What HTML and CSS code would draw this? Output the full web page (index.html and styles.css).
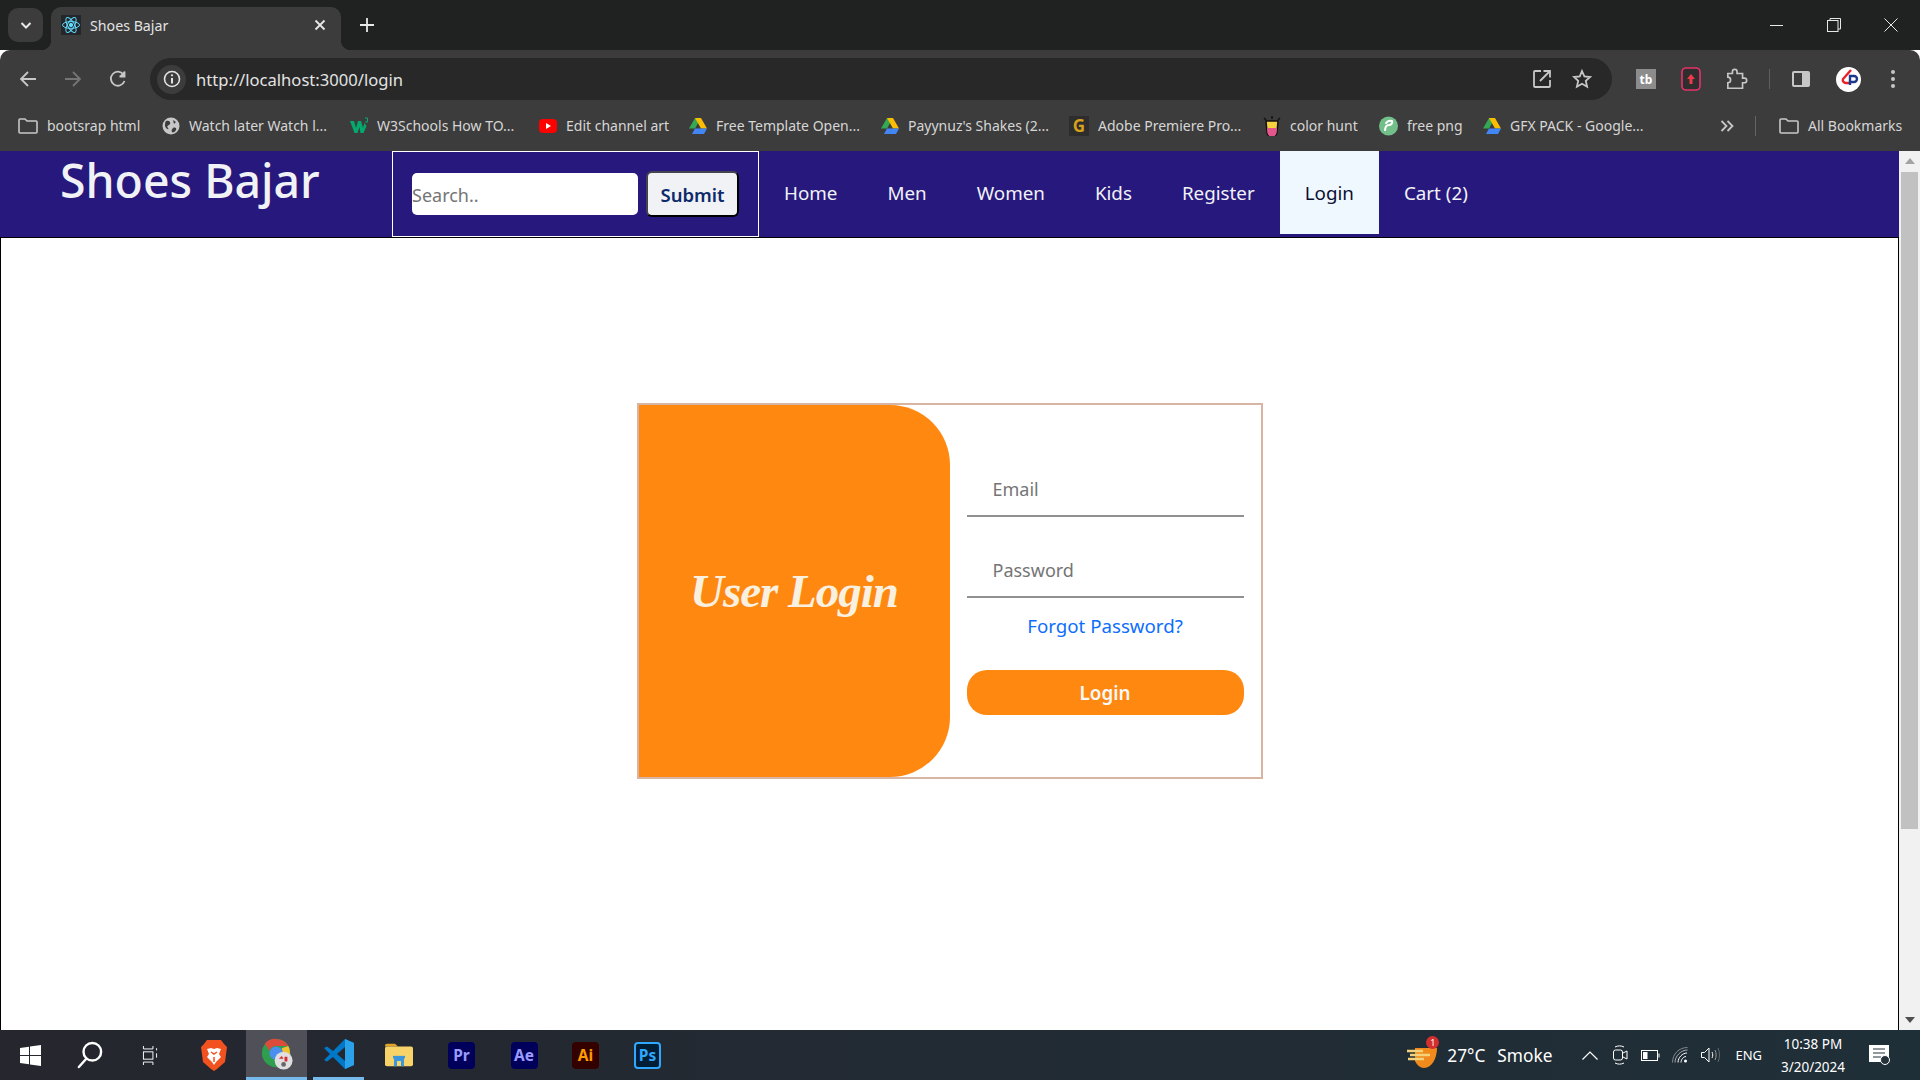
FILE: index.html
```html
<!DOCTYPE html>
<html lang="en">

<head>
    <meta charset="UTF-8">
    <meta name="viewport" content="width=device-width, initial-scale=1.0">
    <title>Shoes Bajar</title>
    <link rel="stylesheet" href="styles.css">
</head>

<body>
    <div class="screen">
        <!-- tab strip -->
        <div class="tabstrip">
            <div class="tab-search">
                <svg width="14" height="14" viewBox="0 0 14 14"><path d="M2.5 5l4.5 4.5L11.500 5" fill="none" stroke="#e8e8e8" stroke-width="2"/></svg>
            </div>
            <div class="tab">
                <div class="favicon">
                    <svg width="20" height="20" viewBox="0 0 20 20" fill="none" stroke="#61dafb" stroke-width="1">
                        <ellipse cx="10" cy="10" rx="8.500" ry="3.400"/>
                        <ellipse cx="10" cy="10" rx="8.500" ry="3.400" transform="rotate(60 10 10)"/>
                        <ellipse cx="10" cy="10" rx="8.500" ry="3.400" transform="rotate(120 10 10)"/>
                        <circle cx="10" cy="10" r="1.700" fill="#61dafb"/>
                    </svg>
                </div>
                <span class="tab-title">Shoes Bajar</span>
                <svg class="tab-close" width="12" height="12" viewBox="0 0 12 12"><path d="M1.500 1.500l9 9M10.500 1.500l-9 9" stroke="#e8e8e8" stroke-width="1.800"/></svg>
            </div>
            <svg class="new-tab" width="14" height="14" viewBox="0 0 14 14"><path d="M7 0v14M0 7h14" stroke="#e8e8e8" stroke-width="1.800"/></svg>
            <div class="win-btns">
                <svg width="14" height="14" viewBox="0 0 14 14"><path d="M0 7.500h13" stroke="#e8e8e8"/></svg>
                <svg width="14" height="14" viewBox="0 0 14 14" fill="none" stroke="#e8e8e8"><rect x="0.500" y="2.500" width="10.500" height="11"/><path d="M3 2.500V.5h10.500V11H11"/></svg>
                <svg width="14" height="14" viewBox="0 0 14 14"><path d="M.5.500l13 13M13.500.500l-13 13" stroke="#e8e8e8"/></svg>
            </div>
        </div>

        <!-- toolbar -->
        <div class="toolbar">
            <div class="nav-icons">
                <svg width="18" height="18" viewBox="0 0 18 18" fill="none" stroke="#c7c7c7" stroke-width="1.800"><path d="M17 9H2M9 2L2 9l7 7"/></svg>
                <svg width="18" height="18" viewBox="0 0 18 18" fill="none" stroke="#757575" stroke-width="1.800"><path d="M1 9h15M9 2l7 7-7 7"/></svg>
                <svg width="18" height="18" viewBox="0 0 18 18" fill="none" stroke="#c7c7c7" stroke-width="1.800"><path d="M15.500 11a7 7 0 1 1-1-6.500"/><path d="M15.500 1v5h-5" fill="#c7c7c7" stroke="none"/><path d="M15.500 1.500v5h-5"/></svg>
            </div>
            <div class="omnibox">
                <div class="site-chip">
                    <svg width="18" height="18" viewBox="0 0 18 18" fill="none" stroke="#e3e3e3" stroke-width="1.600"><circle cx="9" cy="9" r="7.500"/><path d="M9 8v5.500" stroke-width="2"/><circle cx="9" cy="5.300" r="1.100" fill="#e3e3e3" stroke="none"/></svg>
                </div>
                <span class="url">http://localhost:3000/login</span>
                <svg class="omni-icon" width="20" height="20" viewBox="0 0 20 20" fill="none" stroke="#c7c7c7" stroke-width="1.800"><path d="M9 2H3a1 1 0 0 0-1 1v14a1 1 0 0 0 1 1h14a1 1 0 0 0 1-1v-6"/><path d="M8 12L18 2M11.500 2H18v6.500"/></svg>
                <svg class="omni-icon" width="20" height="20" viewBox="0 0 20 20" fill="none" stroke="#c7c7c7" stroke-width="1.800"><path d="M10 2l2.400 5.400 5.800.6-4.400 3.900 1.300 5.800-5.100-3-5.100 3 1.300-5.800L2 8l5.800-.6z"/></svg>
            </div>
            <div class="ext-icons">
                <div class="ext-tb"><span>tb</span></div>
                <svg width="20" height="24" viewBox="0 0 20 24"><rect x="1" y="1" width="18" height="22" rx="4" fill="#2e2e2e" stroke="#e8336a" stroke-width="1.600"/><path d="M10 7l4 5h-2.500v5h-3v-5H6z" fill="#f03a4a"/></svg>
                <svg width="22" height="24" viewBox="0 0 22 24" fill="none" stroke="#c7c7c7" stroke-width="1.800"><path d="M2 6h5V4a2.500 2.500 0 0 1 5 0v2h6v5h2a2.500 2.500 0 0 1 0 5h-2v6H2v-6a3 3 0 0 0 0-6z" transform="translate(0 1) scale(.92)"/></svg>
                <div class="tool-sep"></div>
                <svg width="20" height="20" viewBox="0 0 20 20"><rect x="1" y="2" width="18" height="16" rx="2" fill="#c7c7c7"/><rect x="3" y="4" width="8" height="12" fill="#3c3c3c"/></svg>
                <div class="avatar">
                    <svg width="24" height="24" viewBox="0 0 24 24" fill="none" stroke-width="2.400"><path d="M14 3L6 12a3 3 0 0 0 3 4h3" stroke="#e8202a"/><path d="M13 18V9h4a3 3 0 0 1 0 6h-3" stroke="#1c3a8a"/></svg>
                </div>
                <svg class="menu-dots" width="6" height="20" viewBox="0 0 6 20" fill="#c7c7c7"><circle cx="3" cy="3" r="2"/><circle cx="3" cy="10" r="2"/><circle cx="3" cy="17" r="2"/></svg>
            </div>
        </div>

        <!-- bookmarks -->
        <div class="bookmarks">
            <div class="bm">
                <svg width="20" height="18" viewBox="0 0 20 18" fill="none" stroke="#c7c7c7" stroke-width="1.600"><path d="M1 3a1 1 0 0 1 1-1h5l2 2h9a1 1 0 0 1 1 1v10a1 1 0 0 1-1 1H2a1 1 0 0 1-1-1z"/></svg>
                <span>bootsrap html</span>
            </div>
            <div class="bm">
                <svg width="18" height="18" viewBox="0 0 18 18"><circle cx="9" cy="9" r="8.500" fill="#c7c7c7"/><path d="M4 4c3-1 5 1 4 3S4 8 6 11s-3 0-3-2 0-4 1-5zM11 11c2-1 4 0 3 2s-3 3-4 2 0-3 1-4zM11 3l3 2-2 2z" fill="#3c3c3c"/></svg>
                <span>Watch later Watch l...</span>
            </div>
            <div class="bm">
                <svg width="18" height="18" viewBox="0 0 18 18"><path d="M0 4h4l2 7 2-7h3l2 7 1.500-5 2 3-3 7h-3L9.500 10 7.500 16h-3z" fill="#04aa6d"/><path d="M15 1h2.500v4H15" fill="none" stroke="#04aa6d"/></svg>
                <span>W3Schools How TO...</span>
            </div>
            <div class="bm">
                <svg width="18" height="18" viewBox="0 0 18 18"><rect y="2" width="18" height="14" rx="4" fill="#f00"/><path d="M7 6l5 3-5 3z" fill="#fff"/></svg>
                <span>Edit channel art</span>
            </div>
            <div class="bm">
                <svg class="drive" width="18" height="16" viewBox="0 0 18 16"><path d="M6 0h6l-6 10.500H0z" fill="#34a853"/><path d="M12 0l6 10.500h-6L6 0z" fill="#fbbc04"/><path d="M3 16l3-5.500h12L15 16z" fill="#4285f4"/></svg>
                <span>Free Template Open...</span>
            </div>
            <div class="bm">
                <svg class="drive" width="18" height="16" viewBox="0 0 18 16"><path d="M6 0h6l-6 10.500H0z" fill="#34a853"/><path d="M12 0l6 10.500h-6L6 0z" fill="#fbbc04"/><path d="M3 16l3-5.500h12L15 16z" fill="#4285f4"/></svg>
                <span>Payynuz's Shakes (2...</span>
            </div>
            <div class="bm">
                <div class="g-icon">G</div>
                <span>Adobe Premiere Pro...</span>
            </div>
            <div class="bm">
                <svg width="18" height="20" viewBox="0 0 18 20"><path d="M3 5h12l-1 11a4 4 0 0 1-10 0z" fill="#f7d23e" stroke="#111" stroke-width="1.500"/><path d="M4 12h10l-.4 4a4 4 0 0 1-9.200 0z" fill="#e5568c"/><path d="M1 2l2 2M9 0v3M17 2l-2 2" stroke="#111" stroke-width="1.500"/></svg>
                <span>color hunt</span>
            </div>
            <div class="bm">
                <svg width="19" height="20" viewBox="0 0 19 20"><circle cx="9.500" cy="10" r="9.500" fill="#72bf8a"/><path d="M6 15c0-4 2-6 4-6s4-2 3-4c-3-1-6 1-6 3" fill="none" stroke="#fff" stroke-width="2"/></svg>
                <span>free png</span>
            </div>
            <div class="bm">
                <svg class="drive" width="18" height="16" viewBox="0 0 18 16"><path d="M6 0h6l-6 10.500H0z" fill="#34a853"/><path d="M12 0l6 10.500h-6L6 0z" fill="#fbbc04"/><path d="M3 16l3-5.500h12L15 16z" fill="#4285f4"/></svg>
                <span>GFX PACK - Google...</span>
            </div>
            <svg class="more" width="14" height="12" viewBox="0 0 14 12" fill="none" stroke="#c7c7c7" stroke-width="1.800"><path d="M1.500 1l5 5-5 5M7.500 1l5 5-5 5"/></svg>
            <div class="bm-sep"></div>
            <div class="bm">
                <svg width="20" height="18" viewBox="0 0 20 18" fill="none" stroke="#c7c7c7" stroke-width="1.600"><path d="M1 3a1 1 0 0 1 1-1h5l2 2h9a1 1 0 0 1 1 1v10a1 1 0 0 1-1 1H2a1 1 0 0 1-1-1z"/></svg>
                <span>All Bookmarks</span>
            </div>
        </div>

        <!-- the page itself -->
        <div class="viewport">
            <div class="page">
                <div class="navbar">
                    <div class="logo">Shoes Bajar</div>
                    <form class="search">
                        <input class="search-input" type="text" placeholder="Search..">
                        <button class="search-btn" type="button">Submit</button>
                    </form>
                    <ul class="menu">
                        <li>Home</li>
                        <li>Men</li>
                        <li>Women</li>
                        <li>Kids</li>
                        <li>Register</li>
                        <li class="active">Login</li>
                        <li>Cart (2)</li>
                    </ul>
                </div>

                <div class="content">
                    <div class="card">
                        <div class="card-left">
                            <h2>User Login</h2>
                        </div>
                        <form class="card-form">
                            <input class="field" type="text" placeholder="Email">
                            <input class="field" type="password" placeholder="Password">
                            <a class="forgot">Forgot Password?</a>
                            <button class="login-btn" type="button">Login</button>
                        </form>
                    </div>
                </div>
            </div>
            <div class="scrollbar">
                <div class="arrow-up"></div>
                <div class="track"><div class="thumb"></div></div>
                <div class="arrow-down"></div>
            </div>
        </div>

        <!-- windows taskbar -->
        <div class="taskbar">
            <div class="task-apps">
                <div class="task-item">
                    <svg width="21" height="21" viewBox="0 0 21 21" fill="#fff"><path d="M0 3l9-1.300V10H0zM10 1.500L21 0v10H10zM0 11h9v8.300L0 18zM10 11h11v10l-11-1.500z"/></svg>
                </div>
                <div class="task-item">
                    <svg width="26" height="28" viewBox="0 0 28 30" fill="none" stroke="#fff" stroke-width="2.600"><circle cx="16.500" cy="11.500" r="9.500"/><path d="M10 19l-8 9" stroke-linecap="round"/></svg>
                </div>
                <div class="task-item">
                    <svg width="20" height="19" viewBox="0 0 20 26" fill="none" stroke="#fff" stroke-width="1.300"><path d="M1 0v4h13V0M1 26v-4h13v4"/><rect x="1" y="8" width="13" height="10"/><path d="M19 3v3M19 10v6"/></svg>
                </div>
                <div class="task-item">
                    <svg width="26" height="31" viewBox="0 0 26 31"><path d="M6 0h14l3 4 3 3-2 15-8 7-3 2-3-2-8-7L0 7l3-3z" fill="#f1521f"/><path d="M6 9l4-1 3 1 3-1 4 1-2 5 2 3-5 5-2 3-2-3-5-5 2-3z" fill="#fff"/><path d="M10 12l3 2 3-2M13 17v5" stroke="#f1521f" stroke-width="1.500" fill="none"/></svg>
                </div>
                <div class="task-item on active-app">
                    <svg width="32" height="34" viewBox="0 0 32 36">
                        <circle cx="15" cy="17" r="15" fill="#2f9e4f"/>
                        <path d="M15 2a15 15 0 0 1 13 7.500H15a7.500 7.500 0 0 0-7 5L3 7a15 15 0 0 1 12-5z" fill="#dd4b3a"/>
                        <path d="M28 9.500A15 15 0 0 1 21 30l-5-8a7.500 7.500 0 0 0 5-10z" fill="#f3c12d"/>
                        <circle cx="15" cy="17" r="7" fill="#4a8ef0"/>
                        <circle cx="23" cy="25" r="9.500" fill="#dfdfdf"/>
                        <path d="M18 23l3-3 2 3zM24 21h3v5h-3z" fill="#d92b35"/>
                        <circle cx="23" cy="29" r="2.500" fill="#666"/>
                    </svg>
                </div>
                <div class="task-item on code-app">
                    <svg width="30" height="30" viewBox="0 0 30 30"><path d="M21 0l9 4v22l-9 4-12-12-6 4.500L0 21l6-6-6-6 3-1.500L9 12z" fill="#0078c8"/><path d="M21 0l9 4v22l-9 4z" fill="#2ba1ea"/><path d="M21 8l-8 7 8 7z" fill="#25272f"/></svg>
                </div>
                <div class="task-item">
                    <svg width="28" height="24" viewBox="0 0 28 28" preserveAspectRatio="none"><path d="M0 3a2 2 0 0 1 2-2h8l3 3H0z" fill="#e0a526"/><rect y="4" width="28" height="23" rx="2" fill="#f8d36a"/><path d="M9 27v-9a2 2 0 0 1 2-2h6a2 2 0 0 1 2 2v9h-3v-6h-4v6z" fill="#3a96dd"/><rect x="8" y="15" width="12" height="3" fill="#3a96dd"/></svg>
                </div>
                <div class="task-item"><div class="adobe pr">Pr</div></div>
                <div class="task-item"><div class="adobe ae">Ae</div></div>
                <div class="task-item"><div class="adobe ai">Ai</div></div>
                <div class="task-item"><div class="adobe ps">Ps</div></div>
            </div>

            <div class="tray">
                <div class="weather-icon">
                    <svg width="30" height="26" viewBox="0 0 30 26"><path d="M8 6h22c0 10-5 20-13 20-4 0-7-3-9-7z" fill="#f08a1d"/><path d="M0 9h16M3 13h20M1 17h16" stroke="#f4d27a" stroke-width="2.500"/></svg>
                    <span class="weather-badge">1</span>
                </div>
                <span class="temp">27°C</span>
                <span class="cond">Smoke</span>
                <svg class="tray-chevron" width="16" height="9" viewBox="0 0 16 9" fill="none" stroke="#fff" stroke-width="1.200"><path d="M.5 8.500L8 1l7.500 7.500"/></svg>
                <svg class="tray-meet" width="15" height="20" viewBox="0 0 15 20" fill="none" stroke="#fff"><path d="M2 2c3-1.500 6-1.500 9 0M2 18c3 1.500 6 1.500 9 0"/><rect x=".5" y="5" width="9" height="10" rx="2"/><path d="M10 8l4-2v8l-4-2"/></svg>
                <svg class="tray-batt" width="19" height="11" viewBox="0 0 19 11" fill="none" stroke="#fff"><rect x=".5" y=".5" width="16" height="10"/><rect x="2" y="2" width="4.500" height="7" fill="#fff" stroke="none"/><path d="M18 3.500v4"/></svg>
                <svg class="tray-wifi" width="16" height="16" viewBox="0 0 16 16" fill="none" stroke="#fff"><path d="M.5 15.500C.5 7 7 .5 15.500.5" stroke="#888"/><path d="M3 15.500C3 9 9 3 15.500 3" stroke="#aaa"/><path d="M6 15.500C6 10.500 10.500 6 15 6"/><path d="M9 15.500c0-3 2.500-6 5-6"/><circle cx="13.500" cy="14" r="1.500" fill="#fff" stroke="none"/></svg>
                <svg class="tray-vol" width="20" height="16" viewBox="0 0 20 16" fill="none" stroke="#fff"><path d="M.5 5.500h3L8 1v14l-4.500-4.500h-3z"/><path d="M11 5c1 2 1 4 0 6"/><path d="M14 3c1.500 3 1.500 7 0 10" stroke="#999"/><path d="M17 1c2 4 2 10 0 14" stroke="#666"/></svg>
                <span class="lang">ENG</span>
                <div class="clock">
                    <span>10:38 PM</span>
                    <span>3/20/2024</span>
                </div>
                <svg class="tray-note" width="21" height="20" viewBox="0 0 21 20"><path d="M0 0h20v17H0z" fill="#fff"/><path d="M4 4h12M4 8h12M4 12h8" stroke="#26323a" stroke-width="1.200"/><circle cx="16" cy="15" r="4.500" fill="#26323a" stroke="#fff"/></svg>
            </div>
        </div>
    </div>
</body>

</html>
```

FILE: styles.css
```css
* {
    margin: 0;
    padding: 0;
    box-sizing: border-box;
    list-style: none;
}

body {
    overflow: hidden;
    font-family: "Noto Sans", sans-serif;
    background: #fff;
}

.screen {
    display: flex;
    flex-direction: column;
    width: 1920px;
    height: 1080px;
}

/* tab strip */
.tabstrip {
    display: flex;
    align-items: flex-end;
    height: 50px;
    padding-left: 8px;
    background: #202222;
}

.tab-search {
    display: flex;
    align-items: center;
    justify-content: center;
    width: 35px;
    height: 34px;
    margin-bottom: 8px;
    border-radius: 10px;
    background: #3c3c3c;
}

.tab {
    position: relative;
    display: flex;
    align-items: center;
    width: 290px;
    height: 43px;
    margin-left: 8px;
    padding: 0 15px 7px 10px;
    border-radius: 10px 10px 0 0;
    background: #3c3c3c;
}

.tab::before,
.tab::after {
    content: "";
    position: absolute;
    bottom: 0;
    width: 10px;
    height: 10px;
}

.tab::before {
    left: -10px;
    background: radial-gradient(circle at 0 0, transparent 10px, #3c3c3c 10.5px);
}

.tab::after {
    right: -10px;
    background: radial-gradient(circle at 100% 0, transparent 10px, #3c3c3c 10.5px);
}

.favicon {
    display: flex;
    width: 20px;
    height: 20px;
    background: #23272b;
}

.tab-title {
    flex: 1;
    margin-left: 9px;
    font-size: 14.200px;
    color: #e3e3e3;
}

.new-tab {
    align-self: center;
    margin: 0 0 0 19px;
}

.win-btns {
    display: flex;
    gap: 43px;
    align-self: center;
    margin-left: auto;
    padding-right: 22px;
}

/* toolbar */
.toolbar {
    display: flex;
    height: 50px;
    padding-top: 8px;
    border-radius: 10px 10px 0 0;
    background: #3c3c3c;
}

.nav-icons {
    display: flex;
    align-items: center;
    gap: 27px;
    width: 150px;
    height: 42px;
    padding-left: 19px;
}

.omnibox {
    display: flex;
    align-items: center;
    width: 1462px;
    height: 42px;
    padding: 0 20px 0 7px;
    border-radius: 21px;
    background: #282828;
}

.site-chip {
    display: flex;
    align-items: center;
    justify-content: center;
    width: 29px;
    height: 29px;
    border-radius: 50%;
    background: #3c3c3c;
}

.url {
    flex: 1;
    margin-left: 10px;
    font-size: 16.600px;
    color: #e3e3e3;
}

.omni-icon {
    margin-left: 20px;
}

.ext-icons {
    display: flex;
    align-items: center;
    height: 42px;
    padding-left: 24px;
    gap: 25px;
}

.ext-tb {
    display: flex;
    align-items: center;
    justify-content: center;
    width: 20px;
    height: 20px;
    font-size: 12px;
    font-weight: 700;
    color: #fff;
    background: #8c8c8c;
}

.tool-sep {
    width: 1px;
    height: 20px;
    margin: 0 -4px;
    background: #5f5f5f;
}

.avatar {
    display: flex;
    align-items: center;
    justify-content: center;
    width: 25px;
    height: 25px;
    border-radius: 50%;
    background: #fff;
}

.menu-dots {
    margin-left: 4px;
}

/* bookmarks */
.bookmarks {
    display: grid;
    grid-template-columns: 144px 188px 189px 150px 192px 188px 194px 116px 104px 237px 35px 24px auto;
    align-items: center;
    height: 51px;
    padding-left: 18px;
    background: #3c3c3c;
}

.bm {
    display: flex;
    align-items: center;
    gap: 9px;
    font-size: 14px;
    white-space: nowrap;
    color: #d6d6d6;
}

.bm .drive {
    flex: none;
}

.g-icon {
    width: 20px;
    height: 20px;
    font-size: 17px;
    font-weight: 700;
    line-height: 20px;
    text-align: center;
    color: #d7a11c;
    background: #2d2d2d;
}

.bm-sep {
    width: 1px;
    height: 20px;
    background: #666;
}

/* page */
.viewport {
    display: flex;
    height: 879px;
}

.page {
    display: flex;
    flex-direction: column;
    flex: 1;
}

.navbar {
    display: flex;
    height: 86px;
    background: #27187e;
}

.logo {
    width: 392px;
    padding: 0 0 0 60px;
    font-size: 46.400px;
    font-weight: 500;
    line-height: 58px;
    color: #f1f2f6;
}

.search {
    display: flex;
    align-items: center;
    width: 367px;
    padding-left: 19px;
    border: 1px solid #fff;
}

.search-input {
    width: 226px;
    height: 42px;
    padding-top: 1px;
    border: 0;
    border-radius: 5px;
    outline: 0;
    font-family: "Noto Sans", sans-serif;
    font-size: 18px;
    background: #fff;
}

.search-btn {
    width: 93px;
    height: 46px;
    margin-left: 8px;
    border: 2px solid #000;
    border-top-color: #44444f;
    border-left-color: #44444f;
    border-radius: 6px;
    font-family: "Noto Sans", sans-serif;
    font-size: 18.500px;
    font-weight: 600;
    color: #0d2a6b;
    background: #f1f2f6;
}

.menu {
    display: flex;
    height: 83px;
}

.menu li {
    display: flex;
    align-items: center;
    padding: 0 25px;
    font-size: 18.800px;
    color: #f1f2f6;
}

.menu li.active {
    color: #0b1030;
    background: #f0f8ff;
}

.content {
    display: flex;
    justify-content: center;
    flex: 1;
    padding-top: 165px;
    border: 1px solid #000;
    border-bottom: 0;
    background: #fff;
}

.card {
    display: flex;
    width: 626px;
    height: 376px;
    border: 2px solid #d8b4a4;
}

.card-left {
    display: flex;
    align-items: center;
    justify-content: center;
    width: 311px;
    border-radius: 0 60px 60px 0;
    background: #ff8811;
}

.card-left h2 {
    font-family: "Liberation Serif", serif;
    font-size: 47px;
    font-style: italic;
    font-weight: 700;
    letter-spacing: -1px;
    color: #faf0e0;
}

.card-form {
    display: flex;
    flex-direction: column;
    width: 277px;
    margin-left: 17px;
    padding-top: 57px;
}

.field {
    flex: none;
    width: 100%;
    height: 55px;
    margin-bottom: 26px;
    padding: 0 26px;
    border: 0;
    border-bottom: 2px solid #909090;
    outline: 0;
    font-family: "Noto Sans", sans-serif;
    font-size: 18px;
}

.field:nth-child(2) {
    margin-bottom: 15px;
}

.field::placeholder,
.search-input::placeholder {
    color: #757575;
}

.forgot {
    font-size: 18.700px;
    line-height: 26px;
    text-align: center;
    color: #0d6efd;
}

.login-btn {
    flex: none;
    height: 45px;
    margin-top: 31px;
    border: 0;
    border-radius: 20px;
    font-family: "Noto Sans", sans-serif;
    font-size: 18.800px;
    font-weight: 600;
    color: #f8f8f8;
    background: #ff8811;
}

/* fake scrollbar */
.scrollbar {
    display: flex;
    flex-direction: column;
    align-items: center;
    width: 21px;
    background: #f1f1f1;
}

.arrow-up,
.arrow-down {
    flex: none;
    width: 0;
    height: 0;
    margin: 7px 0;
    border-left: 5px solid transparent;
    border-right: 5px solid transparent;
}

.arrow-up {
    border-bottom: 6px solid #a3a3a3;
}

.arrow-down {
    border-top: 6px solid #505050;
}

.track {
    flex: 1;
    width: 100%;
    padding: 1px 2px 0;
}

.thumb {
    height: 657px;
    background: #c1c1c1;
}

/* taskbar */
.taskbar {
    display: flex;
    justify-content: space-between;
    height: 50px;
    background: linear-gradient(90deg, #25262e, #1f2f38);
}

.task-apps {
    display: grid;
    grid-template-columns: 61px 57px 64px 64px 61px 57px 70px 55px 70px 53px 71px;
}

.task-item {
    display: flex;
    align-items: center;
    justify-content: center;
    height: 50px;
}

.task-item.on {
    border-bottom: 3px solid #76b9ed;
}

.active-app {
    background: #4f5058;
}

.code-app {
    margin-left: 6px;
}

.adobe {
    width: 27px;
    height: 27px;
    border-radius: 4px;
    font-size: 15.500px;
    font-weight: 700;
    line-height: 27px;
    text-align: center;
}

.pr {
    color: #9a9aff;
    background: #00005b;
}

.ae {
    color: #9a9aff;
    background: #00005b;
}

.ai {
    color: #ff9a00;
    background: #330000;
}

.ps {
    color: #31a8ff;
    background: #001e36;
    border: 2px solid #31a8ff;
    line-height: 23px;
}

.tray {
    display: flex;
    align-items: center;
    color: #fff;
}

.weather-icon {
    position: relative;
    display: flex;
    margin-right: 10px;
}

.weather-badge {
    position: absolute;
    top: -6px;
    right: -2px;
    width: 13px;
    height: 13px;
    border-radius: 50%;
    font-size: 9px;
    line-height: 13px;
    text-align: center;
    color: #fff;
    background: #d32f2f;
}

.temp {
    font-size: 17.300px;
}

.cond {
    margin-left: 12px;
    font-size: 17.300px;
}

.tray-chevron {
    margin-left: 30px;
}

.tray-meet {
    margin-left: 15px;
}

.tray-batt {
    margin-left: 13px;
}

.tray-wifi {
    margin-left: 12px;
}

.tray-vol {
    margin-left: 13px;
}

.lang {
    margin-left: 14px;
    font-size: 13px;
}

.clock {
    display: flex;
    flex-direction: column;
    align-items: center;
    gap: 5px;
    width: 68px;
    margin-left: 17px;
    font-size: 13.500px;
    line-height: 18px;
}

.tray-note {
    margin: 0 30px 0 22px;
}
```
